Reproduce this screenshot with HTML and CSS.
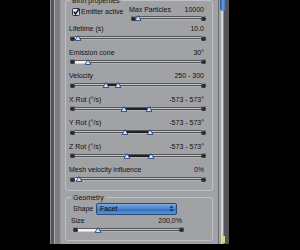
FILE: index.html
```html
<!DOCTYPE html>
<html lang="en">
<head>
    <meta charset="UTF-8">
    <title>Particle emitter</title>
    <link rel="stylesheet" href="styles.css">
</head>
<body>
    <div class="window">
        <div class="frame-left"></div>

        <div class="panel">
            <fieldset class="group birth">
                <legend>Birth properties</legend>

                <div class="row-top">
                    <label class="check">
                        <svg class="box" width="8" height="8" viewBox="0 0 8 8">
                            <rect x="0.5" y="0.5" width="7" height="7" rx="1" fill="#dfe1e6" stroke="#2b3140"/>
                            <path d="M1.8 3.8 L3.5 6 L7.2 0.6" fill="none" stroke="#111" stroke-width="1.4"/>
                        </svg>
                        <span>Emitter active</span>
                    </label>
                    <div class="field max">
                        <div class="field-head"><span>Max Particles</span><span class="val">10000</span></div>
                        <div class="slider single" style="--v:9%">
                            <span class="cap"></span><span class="groove"></span><span class="cap"></span>
                            <span class="lit"></span>
                            <svg class="knob" width="7" height="6" viewBox="0 0 7 6"><polygon points="3.5,0.6 6.5,5.4 0.5,5.4"/></svg>
                        </div>
                    </div>
                </div>

                <div class="field">
                    <div class="field-head"><span>Lifetime (s)</span><span class="val">10.0</span></div>
                    <div class="slider single" style="--v:6%">
                        <span class="cap"></span><span class="groove"></span><span class="cap"></span>
                        <span class="lit"></span>
                        <svg class="knob" width="7" height="6" viewBox="0 0 7 6"><polygon points="3.5,0.6 6.5,5.4 0.5,5.4"/></svg>
                    </div>
                </div>

                <div class="field">
                    <div class="field-head"><span>Emission cone</span><span class="val">30°</span></div>
                    <div class="slider single" style="--v:13%">
                        <span class="cap"></span><span class="groove"></span><span class="cap"></span>
                        <span class="lit"></span>
                        <svg class="knob" width="7" height="6" viewBox="0 0 7 6"><polygon points="3.5,0.6 6.5,5.4 0.5,5.4"/></svg>
                    </div>
                </div>

                <div class="field">
                    <div class="field-head"><span>Velocity</span><span class="val">250 - 300</span></div>
                    <div class="slider range" style="--a:26.5%; --b:35.3%">
                        <span class="cap"></span><span class="groove"></span><span class="cap"></span>
                        <span class="between"></span>
                        <svg class="knob a" width="7" height="6" viewBox="0 0 7 6"><polygon points="3.5,0.6 6.5,5.4 0.5,5.4"/></svg>
                        <svg class="knob b" width="7" height="6" viewBox="0 0 7 6"><polygon points="3.5,0.6 6.5,5.4 0.5,5.4"/></svg>
                    </div>
                </div>

                <div class="field">
                    <div class="field-head"><span>X Rot (°/s)</span><span class="val">-573 - 573°</span></div>
                    <div class="slider range" style="--a:39.7%; --b:58%">
                        <span class="cap"></span><span class="groove"></span><span class="cap"></span>
                        <span class="between"></span>
                        <svg class="knob a" width="7" height="6" viewBox="0 0 7 6"><polygon points="3.5,0.6 6.5,5.4 0.5,5.4"/></svg>
                        <svg class="knob b" width="7" height="6" viewBox="0 0 7 6"><polygon points="3.5,0.6 6.5,5.4 0.5,5.4"/></svg>
                    </div>
                </div>

                <div class="field">
                    <div class="field-head"><span>Y Rot (°/s)</span><span class="val">-573 - 573°</span></div>
                    <div class="slider range" style="--a:40.4%; --b:58.8%">
                        <span class="cap"></span><span class="groove"></span><span class="cap"></span>
                        <span class="between"></span>
                        <svg class="knob a" width="7" height="6" viewBox="0 0 7 6"><polygon points="3.5,0.6 6.5,5.4 0.5,5.4"/></svg>
                        <svg class="knob b" width="7" height="6" viewBox="0 0 7 6"><polygon points="3.5,0.6 6.5,5.4 0.5,5.4"/></svg>
                    </div>
                </div>

                <div class="field">
                    <div class="field-head"><span>Z Rot (°/s)</span><span class="val">-573 - 573°</span></div>
                    <div class="slider range" style="--a:41.9%; --b:59.6%">
                        <span class="cap"></span><span class="groove"></span><span class="cap"></span>
                        <span class="between"></span>
                        <svg class="knob a" width="7" height="6" viewBox="0 0 7 6"><polygon points="3.5,0.6 6.5,5.4 0.5,5.4"/></svg>
                        <svg class="knob b" width="7" height="6" viewBox="0 0 7 6"><polygon points="3.5,0.6 6.5,5.4 0.5,5.4"/></svg>
                    </div>
                </div>

                <div class="field last">
                    <div class="field-head"><span>Mesh velocity influence</span><span class="val">0%</span></div>
                    <div class="slider single" style="--v:6.6%">
                        <span class="cap"></span><span class="groove"></span><span class="cap"></span>
                        <span class="lit"></span>
                        <svg class="knob" width="7" height="6" viewBox="0 0 7 6"><polygon points="3.5,0.6 6.5,5.4 0.5,5.4"/></svg>
                    </div>
                </div>
            </fieldset>

            <fieldset class="group geometry">
                <legend>Geometry</legend>
                <div class="geo-body">
                    <div class="shape-row">
                        <span class="shape-label">Shape</span>
                        <div class="select">
                            <span>Facet</span>
                            <svg class="arrows" width="5" height="7" viewBox="0 0 5 7">
                                <polygon points="2.5,0.5 4.5,2.8 0.5,2.8"/>
                                <polygon points="0.5,4.2 4.5,4.2 2.5,6.5"/>
                            </svg>
                        </div>
                    </div>
                    <div class="field size">
                        <div class="field-head"><span>Size</span><span class="val">200,0%</span></div>
                        <div class="slider single" style="--v:22.5%">
                            <span class="cap"></span><span class="groove"></span><span class="cap"></span>
                            <span class="lit"></span>
                            <svg class="knob" width="7" height="6" viewBox="0 0 7 6"><polygon points="3.5,0.6 6.5,5.4 0.5,5.4"/></svg>
                        </div>
                    </div>
                </div>
            </fieldset>
        </div>

        <div class="scrollbar">
            <div class="scroll-thumb"></div>
            <div class="grip"></div>
        </div>
    </div>
</body>
</html>
```

FILE: styles.css
```css
*{
    margin    : 0;
    padding   : 0;
    box-sizing: border-box;
}

body{
    width           : 300px;
    height          : 250px;
    overflow        : hidden;
    background-color: #000;
    font-family     : "Liberation Sans", Arial, sans-serif;
    font-size       : 7px;
    color           : #111;
}

.window{
    display    : flex;
    width      : 179px;
    height     : 244px;
    margin-left: 50px;
    overflow   : hidden;
}

.frame-left{
    flex      : none;
    width     : 11px;
    background: linear-gradient(to right,
        #8c8d90 0 1px,
        #55565a 1px 4px,
        #adaeb2 4px 5px,
        #7c7d81 5px 10px,
        #96979b 10px 11px);
}

.panel{
    flex            : 1;
    background-color: #a1a2a6;
}

/* group boxes */
.group{
    margin       : 0 5px 0 4px;
    border       : 1px solid #c0c1c5;
    border-radius: 3px;
}

.group legend{
    margin-left: 1px;
    padding    : 0 2px;
    line-height: 9px;
    color      : #151515;
}

.birth{
    margin-top: -4px;
    padding   : 0 6px 6.5px 3px;
}

.geometry{
    margin-top: 2px;
    padding   : 0 6px 6px 5px;
    height    : 48px;
}

.geometry legend{
    margin-left: 0;
}

/* rows */
.row-top{
    display      : flex;
    margin-bottom: 1px;
}

.check{
    display    : flex;
    align-items: center;
    gap        : 1px;
    width      : 60px;
    height     : 18px;
    padding    : 0 0 5px 3px;
}

.check .box{
    flex: none;
}

.field{
    margin-bottom: 5.5px;
}

.field.last{
    margin-bottom: 0;
}

.row-top .field{
    flex         : 1;
    margin-bottom: 0;
}

.row-top .field-head{
    height     : 9px;
    line-height: 9px;
}

.row-top .slider{
    margin-left: 2px;
    margin-top : 0;
}

.field-head{
    display        : flex;
    justify-content: space-between;
    height         : 10px;
    line-height    : 10px;
}

.field-head .val{
    padding-right: 2px;
}

/* sliders */
.slider{
    position   : relative;
    display    : flex;
    align-items: center;
    height     : 8px;
    margin-left: 1px;
}

.cap{
    flex         : none;
    width        : 5px;
    height       : 5px;
    border-radius: 2px;
    background   : #2c2d30;
    box-shadow   : inset 0 1px 0 #86878b;
}

.groove{
    flex      : 1;
    height    : 4px;
    background: linear-gradient(to bottom,
        #55565a 0 1px,
        #c2c3c7 1px 2px,
        #505155 2px 3px,
        #b3b4b8 3px 4px);
}

.single .lit{
    position  : absolute;
    left      : 5px;
    top       : 2px;
    width     : calc(var(--v) - 5px);
    height    : 4px;
    background: linear-gradient(to bottom, #5c5d61 0 1px, #f3f3f5 1px 3px, #cfd0d3 3px);
}

.range .between{
    position  : absolute;
    top       : 3px;
    left      : var(--a);
    width     : calc(var(--b) - var(--a));
    height    : 2px;
    background: #1f2022;
}

.knob{
    position : absolute;
    top      : 1px;
    left     : var(--v);
    transform: translateX(-50%);
}

.knob.a{
    left: var(--a);
}

.knob.b{
    left: var(--b);
}

.knob polygon{
    fill        : #e6ecf6;
    stroke      : #2d4f8c;
    stroke-width: 1;
}

/* geometry */
.geo-body{
    width: 113px;
}

.shape-row{
    display    : flex;
    align-items: center;
    height     : 12px;
    margin-top : 1px;
}

.shape-label{
    width      : 25px;
    padding-left: 2px;
}

.select{
    display        : flex;
    align-items    : center;
    justify-content: space-between;
    width          : 81px;
    height         : 12px;
    padding        : 0 2px 0 3px;
    border         : 1px solid #2a4878;
    border-radius  : 2px;
    background     : linear-gradient(to bottom, #7aaae0 0, #4d86cc 45%, #3a72bc 55%, #5a94d6 100%);
    color          : #0c0c10;
}

.arrows polygon{
    fill: #1d2a44;
}

.size{
    margin-top   : 1px;
    margin-bottom: 0;
}

.size .slider{
    margin-left: 2px;
}

/* scrollbar */
.scrollbar{
    flex          : none;
    display       : flex;
    flex-direction: column;
    width         : 11px;
    background    : linear-gradient(to right,
        #6b6c70 0 1px,
        #a1a2a6 1px 3px,
        #d5d6d9 3px 5px,
        #8d8e92 5px 6px,
        #55565a 6px 11px);
}

.scroll-thumb{
    width        : 6px;
    height       : 11px;
    margin-left  : 2px;
    border-radius: 0 0 3px 3px;
    background   : linear-gradient(to right, #23508f, #6c9fe2 50%, #2a5aa0);
}

.grip{
    width      : 3px;
    height     : 7px;
    margin     : auto 0 1px 4px;
    background : #d9d58a;
}
```
